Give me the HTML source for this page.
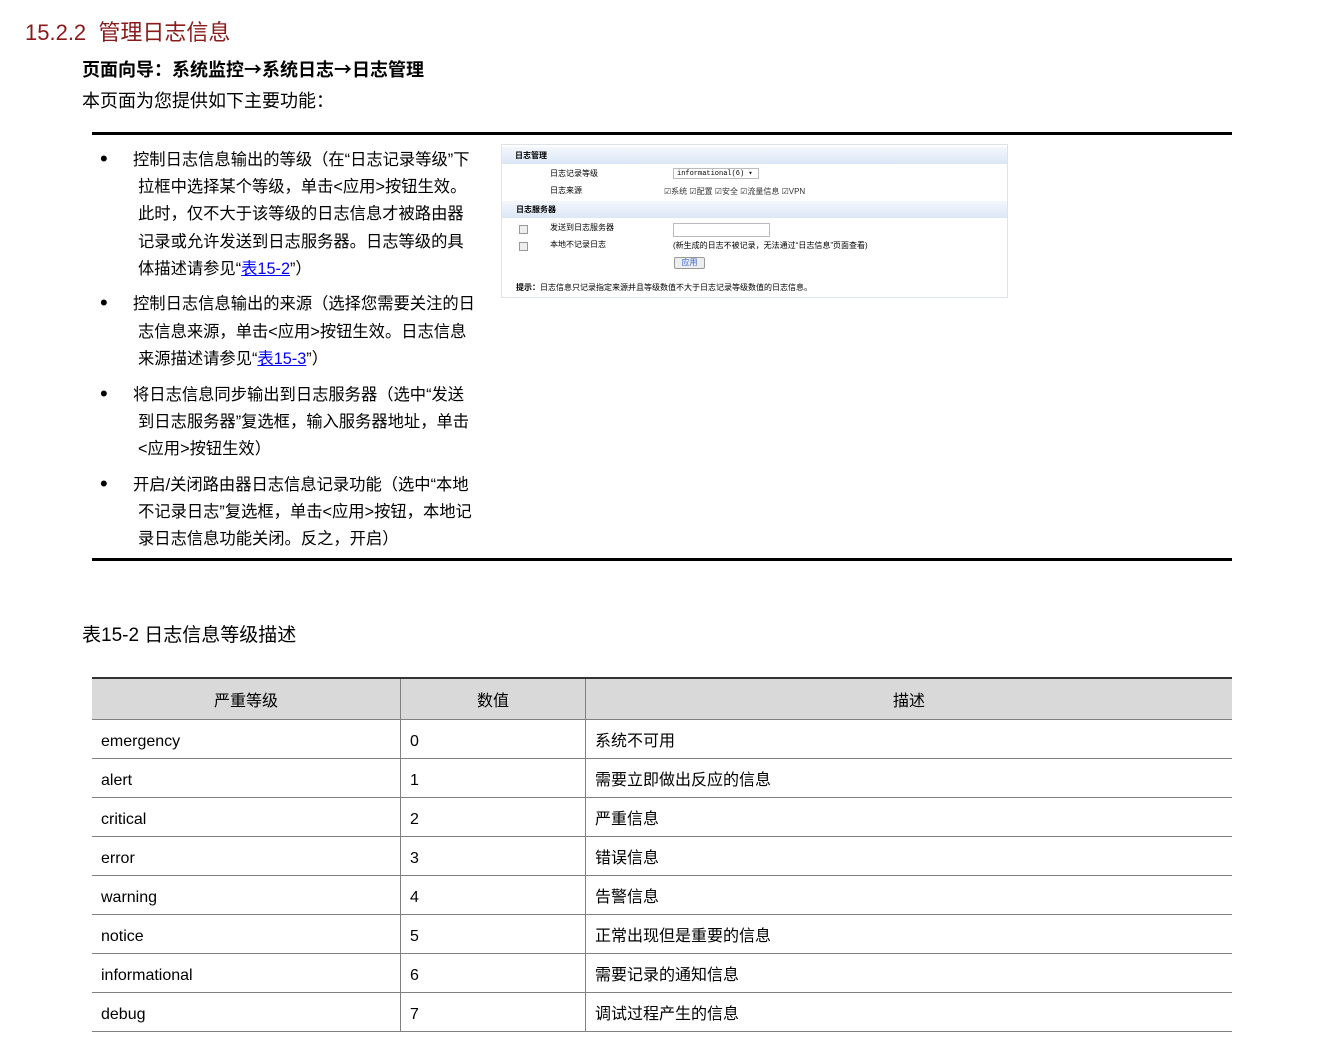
<!DOCTYPE html>
<html><head><meta charset="utf-8"><style>
body{margin:0;width:1334px;height:1054px;background:#fff;position:relative;font-family:"Liberation Sans","Noto Sans CJK SC",sans-serif;color:#000;overflow:hidden}
.a{position:absolute;white-space:nowrap;line-height:1}
.l{font-size:16.3px}
.b{font-size:22px;margin-top:-4px}
a{color:#00f;text-decoration:underline}
.rule{position:absolute;left:92px;width:1140px;height:3px;background:#000}
.p{position:absolute;left:501px;top:144px;width:505px;height:152px;border:1px solid #dde3ea;background:#fff;font-size:8px}
.hb{position:absolute;left:0;width:505px;height:17px;background:linear-gradient(#f4f8fd,#dbe7f6);font-weight:bold}
.cb{position:absolute;width:7px;height:7px;border:1px solid #999;background:#eee}
table{position:absolute;left:92px;top:677px;width:1140px;border-collapse:collapse;font-size:16px}
td,th{border:1px solid #808080;height:38px;padding:0 9px;text-align:left;font-weight:normal}
td.e{padding-top:6px;height:32px}
th{background:#d9d9d9;text-align:center;height:40px;border-top:2px solid #333}
tr td:first-child,tr th:first-child{border-left:none}
tr td:last-child,tr th:last-child{border-right:none}
.ar{font-family:"Noto Sans CJK SC",sans-serif}
</style></head><body>
<div class="a" style="left:25px;top:22px;font-size:22px;color:#8b1a1a">15.2.2&nbsp; 管理日志信息</div>
<div class="a" style="left:82px;top:60px;font-size:18px;font-weight:bold">页面向导：系统监控<span class="ar">→</span>系统日志<span class="ar">→</span>日志管理</div>
<div class="a" style="left:82px;top:92px;font-size:18px">本页面为您提供如下主要功能：</div>
<div class="rule" style="top:132px"></div>
<div class="rule" style="top:558px"></div>

<div class="a b" style="left:100px;top:152px">•</div>
<div class="a l" style="left:133px;top:152px">控制日志信息输出的等级（在“日志记录等级”下</div>
<div class="a l" style="left:138px;top:179px">拉框中选择某个等级，单击&lt;应用&gt;按钮生效。</div>
<div class="a l" style="left:138px;top:206px">此时，仅不大于该等级的日志信息才被路由器</div>
<div class="a l" style="left:138px;top:234px">记录或允许发送到日志服务器。日志等级的具</div>
<div class="a l" style="left:138px;top:261px">体描述请参见“<a>表15-2</a>”）</div>

<div class="a b" style="left:100px;top:296px">•</div>
<div class="a l" style="left:133px;top:296px">控制日志信息输出的来源（选择您需要关注的日</div>
<div class="a l" style="left:138px;top:324px">志信息来源，单击&lt;应用&gt;按钮生效。日志信息</div>
<div class="a l" style="left:138px;top:351px">来源描述请参见“<a>表15-3</a>”）</div>

<div class="a b" style="left:100px;top:387px">•</div>
<div class="a l" style="left:133px;top:387px">将日志信息同步输出到日志服务器（选中“发送</div>
<div class="a l" style="left:138px;top:414px">到日志服务器”复选框，输入服务器地址，单击</div>
<div class="a l" style="left:138px;top:441px">&lt;应用&gt;按钮生效）</div>

<div class="a b" style="left:100px;top:477px">•</div>
<div class="a l" style="left:133px;top:477px">开启/关闭路由器日志信息记录功能（选中“本地</div>
<div class="a l" style="left:138px;top:504px">不记录日志”复选框，单击&lt;应用&gt;按钮，本地记</div>
<div class="a l" style="left:138px;top:531px">录日志信息功能关闭。反之，开启）</div>

<div class="p">
<div class="hb" style="top:2px"><span class="a" style="left:13px;top:5px">日志管理</span></div>
<span class="a" style="left:48px;top:25px">日志记录等级</span>
<div style="position:absolute;left:171px;top:23px;width:86px;height:11px;border:1px solid #bbb;font-family:'Liberation Mono',monospace;font-size:7px;line-height:11px;padding-left:3px;box-sizing:border-box">informational(6) ▾</div>
<span class="a" style="left:48px;top:42px">日志来源</span>
<span class="a" style="left:162px;top:43px;color:#333">☑系统 ☑配置 ☑安全 ☑流量信息 ☑VPN</span>
<div class="hb" style="top:56px"><span class="a" style="left:14px;top:5px">日志服务器</span></div>
<div class="cb" style="left:17px;top:80px"></div>
<span class="a" style="left:48px;top:79px">发送到日志服务器</span>
<div style="position:absolute;left:171px;top:78px;width:95px;height:12px;border:1px solid #bbb"></div>
<div class="cb" style="left:17px;top:97px"></div>
<span class="a" style="left:48px;top:96px">本地不记录日志</span>
<span class="a" style="left:171px;top:97px">(新生成的日志不被记录，无法通过“日志信息”页面查看)</span>
<div style="position:absolute;left:172px;top:112px;width:29px;height:10px;border:1px solid #999;border-radius:2px;background:#eee;color:#36c;text-align:center;line-height:10px">应用</div>
<span class="a" style="left:14px;top:139px"><b>提示：</b>日志信息只记录指定来源并且等级数值不大于日志记录等级数值的日志信息。</span>
</div>

<div class="a" style="left:82px;top:626px;font-size:19px">表15-2 日志信息等级描述</div>
<table>
<tr><th style="width:290px">严重等级</th><th style="width:166px">数值</th><th>描述</th></tr>
<tr><td class="e">emergency</td><td class="e">0</td><td>系统不可用</td></tr>
<tr><td class="e">alert</td><td class="e">1</td><td>需要立即做出反应的信息</td></tr>
<tr><td class="e">critical</td><td class="e">2</td><td>严重信息</td></tr>
<tr><td class="e">error</td><td class="e">3</td><td>错误信息</td></tr>
<tr><td class="e">warning</td><td class="e">4</td><td>告警信息</td></tr>
<tr><td class="e">notice</td><td class="e">5</td><td>正常出现但是重要的信息</td></tr>
<tr><td class="e">informational</td><td class="e">6</td><td>需要记录的通知信息</td></tr>
<tr><td class="e">debug</td><td class="e">7</td><td>调试过程产生的信息</td></tr>
</table>
</body></html>
